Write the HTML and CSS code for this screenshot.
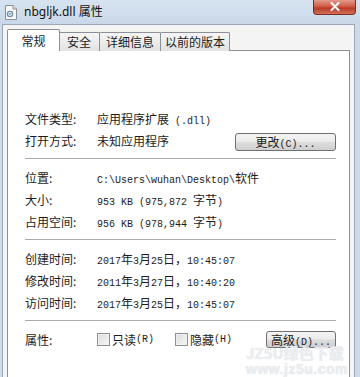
FILE: index.html
```html
<!DOCTYPE html>
<html lang="zh-CN">
<head>
    <meta charset="utf-8">
    <meta name="viewport" content="width=device-width, initial-scale=1">
    <title>nbgljk.dll 属性</title>
    <link rel="stylesheet" href="styles.css">
</head>
<body>
    <div class="window">
        <div class="titlebar">
            <svg class="ticon" width="12" height="15" viewBox="0 0 12 15">
                <path d="M0.5 0.5 H8 L11.5 4 V14.5 H0.5 Z" fill="#fafafa" stroke="#8a8f96"/>
                <path d="M8 0.5 V4 H11.5" fill="#e2e4e8" stroke="#8a8f96"/>
                <circle cx="5" cy="9" r="2.6" fill="none" stroke="#6f8fb4" stroke-width="1.4"/>
                <circle cx="5" cy="9" r="0.9" fill="#6f8fb4"/>
            </svg>
            <span class="ttext">nbgljk.dll 属性</span>
            <div class="close">
                <svg width="10" height="9" viewBox="0 0 10 9">
                    <path d="M1.5 1 L8.5 8 M8.5 1 L1.5 8" stroke="#fff" stroke-width="2" stroke-linecap="round"/>
                </svg>
            </div>
        </div>

        <div class="client">
            <div class="tabs">
                <div class="tab active" style="width:53px">常规</div>
                <div class="tab" style="width:42px">安全</div>
                <div class="tab" style="width:62px">详细信息</div>
                <div class="tab" style="width:70px">以前的版本</div>
            </div>

            <div class="page">
                <div class="sec first">
                    <div class="row">
                        <span class="lbl">文件类型:</span>
                        <span class="val">应用程序扩展<span class="en"> (.dll)</span></span>
                    </div>
                    <div class="row">
                        <span class="lbl">打开方式:</span>
                        <span class="val">未知应用程序</span>
                        <button class="btn change">更改<span class="en">(C)...</span></button>
                    </div>
                </div>
                <hr class="sep">

                <div class="sec">
                    <div class="row">
                        <span class="lbl">位置:</span>
                        <span class="val"><span class="en">C:\Users\wuhan\Desktop\</span>软件</span>
                    </div>
                    <div class="row">
                        <span class="lbl">大小:</span>
                        <span class="val"><span class="en">953 KB (975,872 </span>字节<span class="en">)</span></span>
                    </div>
                    <div class="row">
                        <span class="lbl">占用空间:</span>
                        <span class="val"><span class="en">956 KB (978,944 </span>字节<span class="en">)</span></span>
                    </div>
                </div>
                <hr class="sep">

                <div class="sec">
                    <div class="row">
                        <span class="lbl">创建时间:</span>
                        <span class="val"><span class="en">2017</span>年<span class="en">3</span>月<span class="en">25</span>日，<span class="en">10:45:07</span></span>
                    </div>
                    <div class="row">
                        <span class="lbl">修改时间:</span>
                        <span class="val"><span class="en">2011</span>年<span class="en">3</span>月<span class="en">27</span>日，<span class="en">10:40:20</span></span>
                    </div>
                    <div class="row">
                        <span class="lbl">访问时间:</span>
                        <span class="val"><span class="en">2017</span>年<span class="en">3</span>月<span class="en">25</span>日，<span class="en">10:45:07</span></span>
                    </div>
                </div>
                <hr class="sep">

                <div class="sec">
                    <div class="row">
                        <span class="lbl">属性:</span>
                        <label class="chk"><span class="box"></span>只读<span class="en">(R)</span></label>
                        <label class="chk"><span class="box"></span>隐藏<span class="en">(H)</span></label>
                        <button class="btn adv">高级<span class="en">(D)...</span></button>
                    </div>
                </div>
            </div>
        </div>

        <div class="mark">
            <div class="mark1">JZ5U绿色下载</div>
            <div class="mark2">www.jz5u.com</div>
        </div>
    </div>
</body>
</html>
```

FILE: styles.css
```css
body {
    margin: 0;
    font-family: "Noto Sans CJK SC", sans-serif;
    font-size: 12px;
    color: #1c1c1c;
}
.window {
    position: relative;
    width: 360px;
    height: 377px;
    overflow: hidden;
    background: linear-gradient(90deg, #cfdbe8, #d9e4ef 40%, #cdd9e6);
    display: flex;
    flex-direction: column;
}
.titlebar {
    height: 24px;
    display: flex;
    align-items: center;
    padding-left: 5px;
    background: linear-gradient(180deg, #d7e3f0, #c9d8e9);
    position: relative;
}
.ticon {
    margin-right: 7px;
}
.ttext {
    font-family: "Noto Sans", "Noto Sans CJK SC", sans-serif;
    font-size: 12px;
    color: #111;
    margin-top: -2px;
}
.close {
    position: absolute;
    left: 313px;
    top: -1px;
    width: 41px;
    height: 15px;
    border: 1px solid #7b2d22;
    border-top: none;
    border-radius: 0 0 4px 4px;
    background: linear-gradient(180deg, #e6a497, #cf5a45 50%, #b83a26 60%, #d2705c);
    display: flex;
    align-items: center;
    justify-content: center;
}
.client {
    flex: 1;
    margin: 0 5px 0 2px;
    border: 1px solid #9ba8b7;
    border-bottom: none;
    background: #f4f4f4;
    padding: 4px 4px 0 4px;
    display: flex;
    flex-direction: column;
}
.tabs {
    display: flex;
    align-items: flex-end;
    height: 22px;
    margin-bottom: -1px;
    position: relative;
    z-index: 1;
}
.tab {
    box-sizing: border-box;
    height: 19px;
    border: 1px solid #8c8f96;
    border-bottom: none;
    margin-left: -1px;
    background: linear-gradient(180deg, #f5f5f5, #e3e3e3);
    text-align: center;
    line-height: 17px;
    border-radius: 2px 2px 0 0;
}
.tab.active {
    height: 22px;
    margin-left: 0;
    background: #fff;
    line-height: 22px;
    position: relative;
    z-index: 2;
    margin-right: -2px;
}
.tab.active + .tab {
    margin-left: 0;
}
.page {
    flex: 1;
    background: #fff;
    border: 1px solid #8c8f96;
    border-bottom: none;
    padding: 56px 13px 0 17px;
}
.row {
    display: flex;
    align-items: center;
    height: 22px;
    white-space: nowrap;
}
.lbl {
    width: 72px;
    flex-shrink: 0;
}
.val {
    flex: 1;
}
.en {
    font-family: "Liberation Mono", monospace;
    font-size: 10px;
}
.sep {
    border: none;
    border-top: 1px solid #ababab;
    margin: 7px 0 7px;
    height: 0;
}
.btn {
    box-sizing: border-box;
    font-family: "Noto Sans CJK SC", sans-serif;
    font-size: 12px;
    color: #1c1c1c;
    border: 1px solid #707070;
    border-radius: 3px;
    background: linear-gradient(180deg, #f4f4f4, #ebebeb 48%, #dddddd 52%, #cfcfcf);
    padding: 0;
    line-height: 15px;
    margin-left: auto;
}
.change {
    width: 101px;
    height: 18px;
    align-self: flex-end;
}
.adv {
    width: 70px;
    height: 17px;
}
.chk {
    display: flex;
    align-items: center;
    width: 78px;
}
.box {
    box-sizing: border-box;
    width: 13px;
    height: 13px;
    border: 1px solid #8e8f8f;
    background: linear-gradient(135deg, #dcdcdc, #f6f6f6);
    box-shadow: inset 0 0 0 1px #f0f0f0;
    margin-right: 2px;
}
.mark {
    position: absolute;
    left: 246px;
    top: 344px;
    color: #eceef1;
    font-weight: bold;
    white-space: nowrap;
    text-shadow: 0 0 1px #d0d5db;
    pointer-events: none;
}
.mark1 {
    font-size: 15px;
    line-height: 17px;
}
.mark2 {
    font-family: "Liberation Sans", sans-serif;
    font-size: 14px;
    line-height: 16px;
    letter-spacing: 0.5px;
}
```
